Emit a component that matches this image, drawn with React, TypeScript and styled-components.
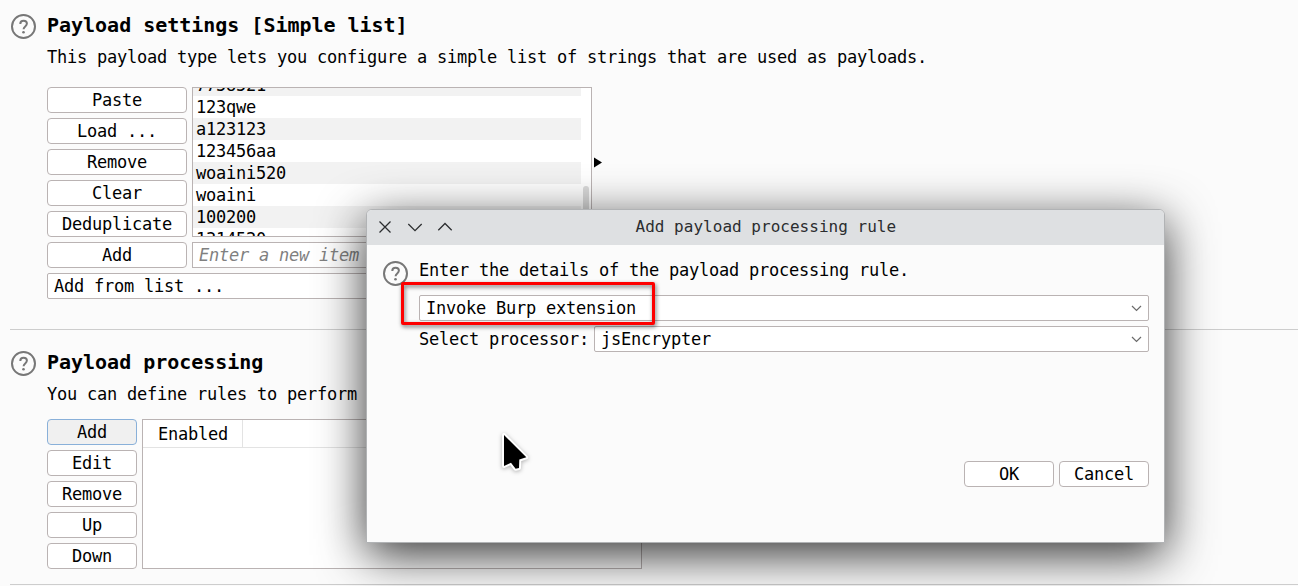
import React from "react";
import styled, { createGlobalStyle, css } from "styled-components";

const Global = createGlobalStyle`
  * { box-sizing: border-box; }
  body {
    margin: 0;
    background: #fbfbfb;
    overflow: hidden;
  }
`;

const Page = styled.main`
  position: relative;
  width: 1298px;
  height: 586px;
  overflow: hidden;
  padding-left: 10px;
  background: #fbfbfb;
  color: #000;
  font-family: "DejaVu Sans Mono", monospace;
  font-size: 17px;
  letter-spacing: -0.234px;
  line-height: 22px;
  white-space: pre;
`;

const Section = styled.section<{ $height: number }>`
  display: flex;
  height: ${(p) => p.$height}px;
  border-bottom: 1px solid #cdcdcd;
`;

const HelpColumn = styled.div<{ $top: number }>`
  flex: 0 0 37px;
  padding-top: ${(p) => p.$top}px;
  svg { display: block; }
`;

const SectionBody = styled.div<{ $top: number }>`
  flex: 1;
  min-width: 0;
  padding-top: ${(p) => p.$top}px;
`;

const Heading = styled.h2`
  margin: 0;
  font-size: 20px;
  font-weight: 700;
  line-height: 24px;
  letter-spacing: -0.02px;
`;

const Description = styled.p<{ $gap: number }>`
  margin: 9px 0 ${(p) => p.$gap}px;
`;

const Columns = styled.div`
  display: flex;
  gap: 5px;
`;

const ButtonStack = styled.div<{ $width: number }>`
  display: flex;
  flex-direction: column;
  gap: 5px;
  width: ${(p) => p.$width}px;
`;

const Button = styled.button<{ $active?: boolean; $width?: number }>`
  height: 26px;
  width: ${(p) => (p.$width ? `${p.$width}px` : "100%")};
  padding: 0;
  border: 1px solid #bab3b3;
  border-radius: 4px;
  background: #fff;
  color: #000;
  font: inherit;
  letter-spacing: inherit;
  line-height: 24px;
  text-align: center;
  ${(p) =>
    p.$active &&
    css`
      background: #f0f0f0;
      border-color: #89b0d9;
    `}
`;

const ListColumn = styled.div`
  display: flex;
  flex-direction: column;
  gap: 5px;
  width: 400px;
`;

const ListBox = styled.div`
  display: flex;
  justify-content: space-between;
  height: 150px;
  border: 1px solid #bab3b3;
  background: #fff;
  overflow: hidden;
`;

const ListRows = styled.div`
  width: 388px;
  margin-top: -14px;
`;

const ListRow = styled.div<{ $shaded: boolean }>`
  height: 22px;
  padding-left: 3px;
  line-height: 22px;
  background: ${(p) => (p.$shaded ? "#f2f2f2" : "#fff")};
`;

const ScrollThumb = styled.div`
  width: 6px;
  height: 40px;
  margin: 98px 2px 0 0;
  border-radius: 3px;
  background: #dbdbdb;
`;

const NewItem = styled.div`
  height: 26px;
  padding-left: 6px;
  border: 1px solid #bab3b3;
  background: #fff;
  color: #808080;
  font-style: italic;
  line-height: 24px;
`;

const Expander = styled.div`
  padding-top: 70px;
  margin-left: -3px;
  svg { display: block; }
`;

const Combo = styled.div<{ $width?: number }>`
  display: flex;
  align-items: center;
  justify-content: space-between;
  height: 26px;
  ${(p) => (p.$width ? `width: ${p.$width}px;` : "flex: 1;")}
  padding: 0 6px;
  border: 1px solid #bab3b3;
  border-radius: 2px;
  background: #fff;
  line-height: 24px;
`;

const ComboLine = styled.div`
  margin-top: 5px;
`;

const RuleTable = styled.div`
  width: 500px;
  height: 150px;
  border: 1px solid #bab3b3;
  background: #fff;
`;

const TableHead = styled.div`
  display: flex;
  height: 28px;
  border-bottom: 1px solid #e3e3e3;
`;

const TableHeadCell = styled.div`
  width: 100px;
  padding-left: 15px;
  border-right: 1px solid #e3e3e3;
  line-height: 28px;
`;

const Dialog = styled.div`
  position: absolute;
  left: 366px;
  top: 209px;
  width: 799px;
  height: 334px;
  border: 1px solid #b1b3b5;
  border-radius: 6px 6px 0 0;
  background: #fbfbfb;
  box-shadow: 0 12px 48px rgba(0, 0, 0, 0.8);
`;

const TitleBar = styled.div`
  display: flex;
  align-items: center;
  height: 35px;
  padding-bottom: 2px;
  border-radius: 5px 5px 0 0;
  background: #dee0e2;
`;

const WindowControls = styled.div`
  display: flex;
  gap: 14px;
  width: 268.5px;
  padding-left: 10px;
`;

const WindowTitle = styled.div`
  color: #2b2d2f;
  font-size: 16px;
  letter-spacing: 0.02px;
`;

const DialogContent = styled.div`
  display: flex;
  padding: 14px 15px 0;
`;

const DialogForm = styled.div`
  flex: 1;
`;

const FormRow = styled.div<{ $top: number }>`
  display: flex;
  gap: 5px;
  margin-top: ${(p) => p.$top}px;
  line-height: 26px;
`;

const DialogActions = styled.div`
  display: flex;
  justify-content: flex-end;
  gap: 5px;
  margin-top: 109px;
`;

const Highlight = styled.div`
  position: absolute;
  left: 34px;
  top: 72px;
  width: 254px;
  height: 43px;
  border: 3px solid #fe0000;
  border-radius: 2px;
  filter: drop-shadow(1px 2px 2px rgba(0, 0, 0, 0.55));
`;

const Pointer = styled.svg`
  position: absolute;
  left: 498px;
  top: 429px;
  filter: drop-shadow(0 1px 2px rgba(0, 0, 0, 0.3));
`;

const HelpIcon = () => (
  <svg width="28" height="28" viewBox="0 0 28 28" fill="none" stroke="#777" strokeWidth="2">
    <circle cx="13.5" cy="13.5" r="11.5" />
    <path d="M10.3 10.9c0-2 1.3-3.2 3.3-3.2s3.3 1.2 3.3 2.9c0 2.8-3.3 2.8-3.3 5.6" />
    <circle cx="13.5" cy="19.2" r="1.3" fill="#777" stroke="none" />
  </svg>
);

const Chevron = () => (
  <svg width="11" height="7" viewBox="0 0 11 7" fill="none" stroke="#6b6b6b" strokeWidth="1.2">
    <path d="M1 1l4.5 4.5L10 1" />
  </svg>
);

const ControlIcon = ({ d }: { d: string }) => (
  <svg width="16" height="16" viewBox="0 0 16 16" fill="none" stroke="#2b2d2f" strokeWidth="1.25">
    <path d={d} />
  </svg>
);

const payloads = ["7758521", "123qwe", "a123123", "123456aa", "woaini520", "woaini", "100200", "1314520"];

export default function App() {
  return (
    <>
      <Global />
      <Page>
        <Section $height={330}>
          <HelpColumn $top={13}>
            <HelpIcon />
          </HelpColumn>
          <SectionBody $top={13}>
            <Heading>Payload settings [Simple list]</Heading>
            <Description $gap={19}>
              This payload type lets you configure a simple list of strings that are used as payloads.
            </Description>
            <Columns>
              <ButtonStack $width={140}>
                {["Paste", "Load ...", "Remove", "Clear", "Deduplicate", "Add"].map((label) => (
                  <Button key={label}>{label}</Button>
                ))}
              </ButtonStack>
              <ListColumn>
                <ListBox>
                  <ListRows>
                    {payloads.map((item, i) => (
                      <ListRow key={item} $shaded={i % 2 === 0}>
                        {item}
                      </ListRow>
                    ))}
                  </ListRows>
                  <ScrollThumb />
                </ListBox>
                <NewItem>Enter a new item</NewItem>
              </ListColumn>
              <Expander>
                <svg width="8" height="11" viewBox="0 0 8 11">
                  <path d="M0 0.5L8 5.5L0 10.5Z" fill="#000" />
                </svg>
              </Expander>
            </Columns>
            <ComboLine>
              <Combo $width={545}>Add from list ...</Combo>
            </ComboLine>
          </SectionBody>
        </Section>

        <Section $height={255}>
          <HelpColumn $top={20}>
            <HelpIcon />
          </HelpColumn>
          <SectionBody $top={20}>
            <Heading>Payload processing</Heading>
            <Description $gap={14}>You can define rules to perform</Description>
            <Columns>
              <ButtonStack $width={90}>
                <Button $active>Add</Button>
                {["Edit", "Remove", "Up", "Down"].map((label) => (
                  <Button key={label}>{label}</Button>
                ))}
              </ButtonStack>
              <RuleTable>
                <TableHead>
                  <TableHeadCell>Enabled</TableHeadCell>
                </TableHead>
              </RuleTable>
            </Columns>
          </SectionBody>
        </Section>

        <Dialog>
          <TitleBar>
            <WindowControls>
              <ControlIcon d="M2.5 2.5l11 11M13.5 2.5l-11 11" />
              <ControlIcon d="M1.3 5l6.7 6.7L14.7 5" />
              <ControlIcon d="M1.3 11.2L8 4.5l6.7 6.7" />
            </WindowControls>
            <WindowTitle>Add payload processing rule</WindowTitle>
          </TitleBar>
          <DialogContent>
            <HelpColumn $top={1}>
              <HelpIcon />
            </HelpColumn>
            <DialogForm>
              <div>Enter the details of the payload processing rule.</div>
              <FormRow $top={14}>
                <Combo>
                  Invoke Burp extension
                  <Chevron />
                </Combo>
              </FormRow>
              <FormRow $top={5}>
                <span>Select processor:</span>
                <Combo>
                  jsEncrypter
                  <Chevron />
                </Combo>
              </FormRow>
              <DialogActions>
                <Button $width={90}>OK</Button>
                <Button $width={90}>Cancel</Button>
              </DialogActions>
            </DialogForm>
          </DialogContent>
          <Highlight />
        </Dialog>

        <Pointer width="34" height="48" viewBox="0 0 34 48">
          <path
            d="M6 6V37L13 33.7L17.6 39.7L21 39L21.3 30.5L28.3 28.3Z"
            fill="#000"
            stroke="#fff"
            strokeWidth="4"
            strokeLinejoin="round"
            paintOrder="stroke"
          />
        </Pointer>
      </Page>
    </>
  );
}
